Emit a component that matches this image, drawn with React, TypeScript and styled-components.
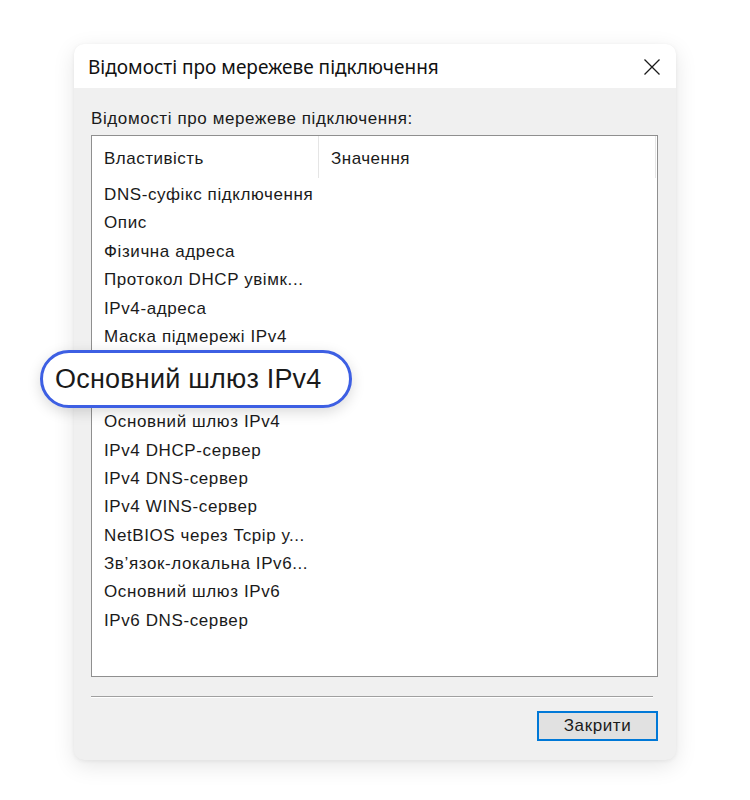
import styled, { createGlobalStyle } from "styled-components";

const GlobalStyle = createGlobalStyle`
  html, body {
    margin: 0;
    padding: 0;
    background: #ffffff;
  }
`;

// two rows sit under the callout and show no text in the picture
const rows = [
  "DNS-суфікс підключення",
  "Опис",
  "Фізична адреса",
  "Протокол DHCP увімк...",
  "IPv4-адреса",
  "Маска підмережі IPv4",
  "",
  "",
  "Основний шлюз IPv4",
  "IPv4 DHCP-сервер",
  "IPv4 DNS-сервер",
  "IPv4 WINS-сервер",
  "NetBIOS через Tcpip у...",
  "Зв’язок-локальна IPv6...",
  "Основний шлюз IPv6",
  "IPv6 DNS-сервер",
];

const CloseIcon = () => (
  <svg width="18" height="18" viewBox="0 0 18 18" fill="none">
    <path d="M1.5 1.5 L16.5 16.5 M16.5 1.5 L1.5 16.5" stroke="#1a1a1a" strokeWidth="1.3" />
  </svg>
);

const App = () => {
  return (
    <>
      <GlobalStyle />
      <Page>
        <Dialog>
          <TitleBar>
            <Title>Відомості про мережеве підключення</Title>
            <CloseButton>
              <CloseIcon />
            </CloseButton>
          </TitleBar>
          <Body>
            <GroupLabel>Відомості про мережеве підключення:</GroupLabel>
            <ListBox>
              <HeaderRow>
                <HeaderCell $width={227}>Властивість</HeaderCell>
                <HeaderCell $width={337}>Значення</HeaderCell>
              </HeaderRow>
              {rows.map((row, index) => (
                <Row key={`row-${index}`}>{row}</Row>
              ))}
            </ListBox>
            <Separator />
            <Footer>
              <CloseAction>Закрити</CloseAction>
            </Footer>
          </Body>
          <Callout>Основний шлюз IPv4</Callout>
        </Dialog>
      </Page>
    </>
  );
};

const Page = styled.div`
  width: 750px;
  height: 800px;
  box-sizing: border-box;
  padding: 44px 0 0 74px;
  font-family: "Liberation Sans", Arial, sans-serif;
  color: #1a1a1a;
`;

const Dialog = styled.div`
  position: relative;
  width: 602px;
  height: 716px;
  background: #f0f0f0;
  border-radius: 10px;
  box-shadow: 0 6px 22px rgba(0, 0, 0, 0.1), 0 1px 4px rgba(0, 0, 0, 0.06);
  display: flex;
  flex-direction: column;
`;

const TitleBar = styled.div`
  height: 44px;
  flex-shrink: 0;
  background: #ffffff;
  border-radius: 10px 10px 0 0;
  display: flex;
  align-items: center;
  justify-content: space-between;
  padding: 0 15px 0 14px;
`;

const Title = styled.span`
  font-family: "Noto Sans", "Open Sans", sans-serif;
  font-size: 19px;
  color: #111;
  margin-top: 2px;
`;

const CloseButton = styled.span`
  display: flex;
  align-items: center;
  margin-top: 1px;
`;

const Body = styled.div`
  flex: 1;
  display: flex;
  flex-direction: column;
  padding: 21px 18px 0 17px;
`;

const GroupLabel = styled.div`
  font-size: 17px;
  letter-spacing: 0.6px;
  line-height: 20px;
  height: 26px;
`;

const ListBox = styled.div`
  width: 567px;
  height: 542px;
  box-sizing: border-box;
  border: 1px solid #8f8f8f;
  background: #ffffff;
  display: flex;
  flex-direction: column;
`;

const HeaderRow = styled.div`
  display: flex;
  height: 42px;
  flex-shrink: 0;
  margin-bottom: 3px;
`;

const HeaderCell = styled.div<{ $width: number }>`
  width: ${(p) => p.$width}px;
  box-sizing: border-box;
  padding: 3px 12px 0;
  display: flex;
  align-items: center;
  font-size: 17px;
  letter-spacing: 0.5px;
  border-right: 1px solid #e5e5e5;
`;

const Row = styled.div`
  height: 28.4px;
  line-height: 28.4px;
  padding-left: 12px;
  font-size: 17px;
  letter-spacing: 0.6px;
  white-space: nowrap;
`;

const Separator = styled.div`
  margin-top: 19px;
  width: 562px;
  height: 1px;
  background: #a0a0a0;
  border-bottom: 1px solid #ffffff;
`;

const Footer = styled.div`
  display: flex;
  justify-content: flex-end;
  padding-top: 13px;
`;

const CloseAction = styled.button`
  width: 121px;
  height: 30px;
  box-sizing: border-box;
  border: 2px solid #0078d7;
  background: #e1e1e1;
  font-family: "Liberation Sans", Arial, sans-serif;
  font-size: 17px;
  letter-spacing: 0.6px;
  color: #1a1a1a;
  padding: 0;
`;

const Callout = styled.div`
  position: absolute;
  left: -34px;
  top: 306px;
  width: 312px;
  height: 58px;
  box-sizing: border-box;
  border: 3px solid #3d5fe3;
  border-radius: 29px;
  background: #ffffff;
  box-shadow: 0 4px 14px rgba(0, 0, 0, 0.15);
  display: flex;
  align-items: center;
  padding-left: 12px;
  font-size: 27px;
  letter-spacing: 0.2px;
  color: #1a1a1a;
`;

export default App;
